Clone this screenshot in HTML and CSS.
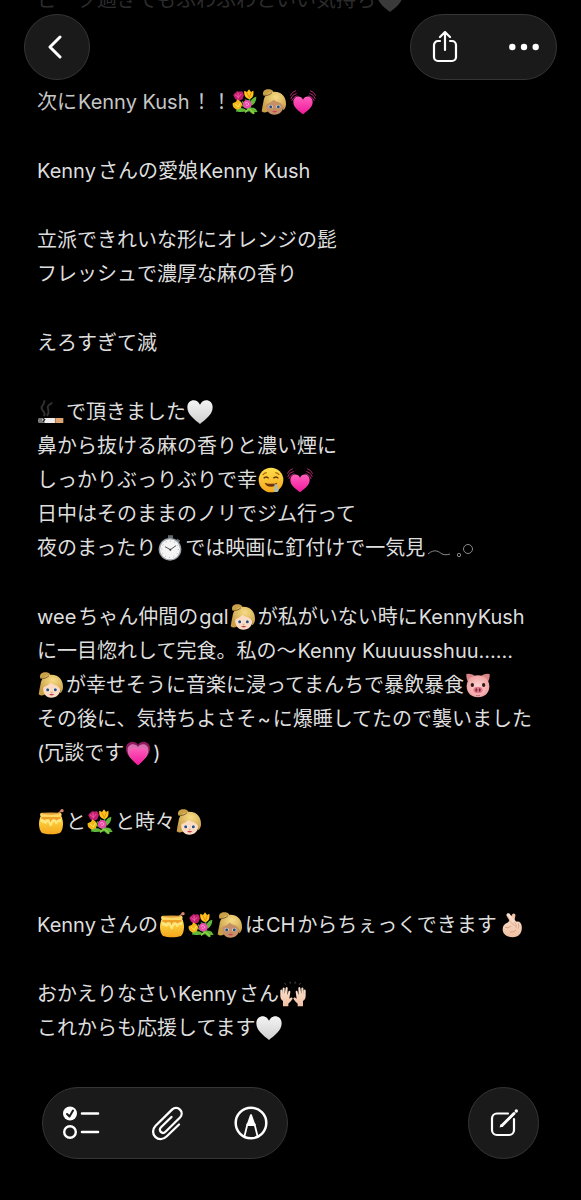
FILE: index.html
```html
<!DOCTYPE html>
<html lang="ja">
<head>
<meta charset="utf-8">
<meta name="viewport" content="width=device-width, initial-scale=1">
<title>Kenny Kush</title>
<link rel="stylesheet" href="styles.css">
</head>
<body>
<svg class="sprite" aria-hidden="true">
  <defs>
    <linearGradient id="pink" x1="0" y1="0" x2="0" y2="1"><stop offset="0" stop-color="#ff5fbd"/><stop offset="1" stop-color="#f0189a"/></linearGradient>
    <linearGradient id="white" x1="0" y1="0" x2="0" y2="1"><stop offset="0" stop-color="#f4f4f4"/><stop offset="1" stop-color="#cfcfcf"/></linearGradient>
    <radialGradient id="hair" cx=".55" cy=".3" r=".7"><stop offset="0" stop-color="#f7dc85"/><stop offset="1" stop-color="#c9a048"/></radialGradient>
    <linearGradient id="yellow" x1="0" y1="0" x2="0" y2="1"><stop offset="0" stop-color="#ffe04a"/><stop offset="1" stop-color="#f5a61d"/></linearGradient>
    <linearGradient id="skin" x1="0" y1="0" x2="0" y2="1"><stop offset="0" stop-color="#fde4d0"/><stop offset="1" stop-color="#f0bfa2"/></linearGradient>
    <radialGradient id="pig"><stop offset="0" stop-color="#ffd6d4"/><stop offset="1" stop-color="#f0a3a3"/></radialGradient>
  </defs>
  <symbol id="woman" viewBox="0 0 78 78">
    <path d="M13 34C3 42 5 58 2 67c7 6 17 4 24-4V36Z" fill="#c9a048"/>
    <path d="M7 19C3 7 12 0 23 1c11 0 17 7 13 14L18 23Z" fill="#c9a048"/>
    <path d="M14 44c0-16 12-24 27-24s27 10 27 27c0 18-12 30-28 30S14 63 14 44Z" fill="currentColor"/>
    <path d="M8 50C4 24 18 8 40 8c24 0 37 18 35 40-1 8-4 13-9 16 3-14-3-20-13-24-7-3-11-4-15-8-5 6-13 9-21 13-2 6-2 12 0 18C11 62 9 56 8 50Z" fill="url(#hair)"/>
    <path d="M8 19c9 2 18-1 25-8" fill="none" stroke="#7f6127" stroke-width="3"/>
    <ellipse cx="29" cy="53" rx="6" ry="5" fill="#fff"/><ellipse cx="52" cy="53" rx="6" ry="5" fill="#fff"/>
    <circle cx="29" cy="53" r="4.500" fill="#284d80"/><circle cx="52" cy="53" r="4.500" fill="#284d80"/>
    <path d="M38 60q3 3 6 0" fill="none" stroke="#b97c60" stroke-width="2"/>
    <path d="M33 67q8-3 16 0-8 7-16 0Z" fill="#cf4254"/>
  </symbol>
  <symbol id="bouquet" viewBox="0 0 78 78">
    <path d="m30 38 33 36M40 31l23 39M18 42l44 25M52 24 57 70M12 66l60-1" stroke="#3f9c36" stroke-width="5" fill="none"/>
    <path d="M56 37c3-9 12-13 17-14 0 12-5 23-15 27ZM49 61c7-6 19-6 23 0l5 8-20 1ZM12 62c10-8 23-5 31 2-10 6-23 8-31-2Z" fill="#63b83a"/>
    <path d="m53 61 14 13M39 70l13-12" stroke="#8ed242" stroke-width="5"/>
    <path d="M4 19c1-7 9-7 11-13 8 5 13-3 18 4 1 6 5 9 0 15 0 8-8 8-13 11-7-2-12-6-16-17Z" fill="#c31d70"/>
    <path d="m9 17 10 8 9-10M18 11l1 17" fill="none" stroke="#ef5ba2" stroke-width="3"/>
    <path d="M37 5 45 9l6-8 6 8 7-4c2 12-1 23-12 25-12-2-17-13-15-25Z" fill="#ffc51c"/>
    <path d="m44 10 8 16 6-16" fill="none" stroke="#e98b12" stroke-width="3"/>
    <path d="m2 43 10-5 4-7 9 6 6 8-4 12-11 5C6 59 1 54 2 43Z" fill="#f4b719"/>
    <path d="m9 45 10 9 6-12" fill="none" stroke="#ffe45a" stroke-width="3"/>
    <path d="M34 39c5-8 17-8 22-1 6 8 1 18-7 20-11 3-20-8-15-19Z" fill="#e94bab"/>
    <path d="M39 43q8-7 12 2-4 7-9 3" fill="none" stroke="#ff9bd1" stroke-width="3"/>
  </symbol>
  <symbol id="beating" viewBox="0 0 78 78">
    <path d="M39 76C25 65 10 55 10 39c0-19 23-22 29-7 6-15 29-12 29 7 0 16-15 26-29 37Z" fill="url(#pink)"/>
    <g fill="none" stroke="#b3246f" stroke-width="3"><path d="M2 30Q6 16 20 13M5 36Q9 24 22 20M1 20Q6 8 18 5"/><path d="M76 30Q72 16 58 13M73 36Q69 24 56 20M77 20Q72 8 60 5"/></g>
  </symbol>
  <symbol id="growing" viewBox="0 0 78 78">
    <path d="M39 72C17 57 3 45 3 25 3 4 29-1 39 14 49-1 75 4 75 25c0 20-14 32-36 47Z" fill="#8e195d"/>
    <path d="M39 74C20 59 7 47 8 30 8 11 31 8 39 21 47 8 70 11 70 30c1 17-12 29-31 44Z" fill="#d66fae"/>
    <path d="M39 76C23 62 12 51 13 37c0-15 20-19 26-6 6-13 26-9 26 6 1 14-10 25-26 39Z" fill="url(#pink)"/>
  </symbol>
  <symbol id="heart" viewBox="0 0 78 78"><path d="M39 75C24 63 1 47 1 25 1 2 29-4 39 17 49-4 77 2 77 25c0 22-23 38-38 50Z" fill="url(#white)"/></symbol>
  <symbol id="fadedheart" viewBox="0 0 78 78"><path d="M39 75C24 63 1 47 1 25 1 2 29-4 39 17 49-4 77 2 77 25c0 22-23 38-38 50Z" fill="#3a3a3a"/></symbol>
  <symbol id="cigarette" viewBox="0 0 78 78">
    <path d="M17 51C29 41 4 33 12 22c4-6 8-9 7-18M26 50c15-12-3-22 5-30 5-6 10-4 11-10" fill="none" stroke="#303030" stroke-width="6"/>
    <path d="M3 57h49v15H3q-4-7 0-15Z" fill="#eee"/><path d="M3 57h12l-3 6 4 4-2 5H3q-4-7 0-15Z" fill="#777"/><path d="m15 58 5 4-4 5 3 4" stroke="#222" stroke-width="4" fill="none"/><path d="M52 57h24v15H52Z" fill="#dda574"/><path d="M52 57v15" stroke="#b77945" stroke-width="2"/>
  </symbol>
  <symbol id="drool" viewBox="0 0 78 78">
    <circle cx="39" cy="39" r="37" fill="url(#yellow)"/>
    <path d="M14 24q5-7 12-7M52 17q7 0 12 7" fill="none" stroke="#a35d0d" stroke-width="3.500"/>
    <path d="M17 34q8-8 15 0M46 34q8-8 15 0" fill="none" stroke="#5e3208" stroke-width="4"/>
    <path d="M20 47q20 7 38 0-4 12-19 12T20 47Z" fill="#70310f"/>
    <path d="M49 52h9l1 11c6 7 3 12-4 12-8 0-10-7-5-13Z" fill="#a9bfae"/>
  </symbol>
  <symbol id="watch" viewBox="0 0 78 78">
    <path d="M33 1h15v9H33zM61 11l9 6-6 7-8-6Z" fill="#606870"/>
    <circle cx="39" cy="43" r="34" fill="#9ba2a9"/><circle cx="39" cy="43" r="30" fill="#f5f5f5"/>
    <circle cx="39" cy="43" r="25" fill="none" stroke="#888" stroke-width="3" stroke-dasharray="2 11"/>
    <path d="m24 35 16 9 17-12" fill="none" stroke="#333" stroke-width="2.500"/><circle cx="40" cy="44" r="3" fill="#333"/>
  </symbol>
  <symbol id="pigface" viewBox="0 0 78 78">
    <path d="M4 6q18-3 27 7L12 33Q3 23 4 6ZM74 6q-18-3-27 7l19 20q9-10 8-27Z" fill="#d98484"/>
    <path d="M39 10c22 0 34 16 34 33 0 21-15 33-34 33S5 64 5 43c0-17 12-33 34-33Z" fill="url(#pig)"/>
    <ellipse cx="22" cy="39" rx="5" ry="6" fill="#30191a"/><ellipse cx="56" cy="39" rx="5" ry="6" fill="#30191a"/>
    <ellipse cx="39" cy="54" rx="14" ry="10" fill="#e7798b"/><ellipse cx="34" cy="54" rx="3" ry="5" fill="#722a3b"/><ellipse cx="44" cy="54" rx="3" ry="5" fill="#722a3b"/>
    <path d="M33 70q6 3 12 0" fill="none" stroke="#a84c5e" stroke-width="2"/>
  </symbol>
  <symbol id="honey" viewBox="0 0 78 78">
    <path d="M54 19 71 5" stroke="#bd6f45" stroke-width="5"/><circle cx="72" cy="5" r="5" fill="#d88974"/>
    <path d="M9 20h60c8 13 9 39-3 52-15 5-39 5-54 0C0 59 1 33 9 20Z" fill="url(#yellow)"/>
    <path d="M8 24h62v13c-5 6-8 0-11 3-2 8-8 7-8 0-9-2-7 6-11 12-8 1-5-12-12-12-3 6-8 7-10 1-5 1-9 0-11-4Z" fill="#ffe67c"/>
    <path d="M10 24h58v5c-7 1-10 2-12 6-4-3-4-5-10-4-5 0-6 4-8 9-4-4-1-9-8-9-6 0-8 1-10 3-3-2-4-4-11-4Z" fill="#eea127"/>
    <rect x="6" y="11" width="65" height="12" rx="6" fill="#ffd86a"/><ellipse cx="38" cy="14" rx="27" ry="3" fill="#e6a238"/>
  </symbol>
  <symbol id="fingers" viewBox="0 0 78 78">
    <path d="M24 44 42 8c4-7 12-3 10 4L46 44Z" fill="#efc0a3"/>
    <path d="M26 12c-3-8 7-11 11-4l18 21c9-2 15 4 16 13 3 18-7 34-27 34-18 0-30-10-30-24 0-10 5-17 14-20l8-4Z" fill="url(#skin)"/>
    <path d="m37 29-9-17M38 30l12 12M49 30q8 7 5 17M61 34q4 9-1 16M21 46q9 4 19-4M36 60q10 2 18-6" fill="none" stroke="#c88d72" stroke-width="2"/>
  </symbol>
  <symbol id="hands" viewBox="0 0 78 78">
    <path d="M9 76V60C3 56 1 50 1 44V28q3-5 6 0v13l1-19q3-5 6 0v18l3-20q4-4 6 1l-1 22 4-13q5-2 5 3l-3 20 4-3c5-2 7 1 5 5-5 7-8 10-12 13v8Z" fill="url(#skin)"/>
    <path d="M69 76V60c6-4 8-10 8-16V28q-3-5-6 0v13l-1-19q-3-5-6 0v18l-3-20q-4-4-6 1l1 22-4-13q-5-2-5 3l3 20-4-3c-5-2-7 1-5 5 5 7 8 10 12 13v8Z" fill="url(#skin)"/>
    <path d="m17 11-3-5M31 8l-1-6M45 8l1-6M58 11l4-5" stroke="#4d4d4d" stroke-width="3"/>
  </symbol>
</svg>

<header class="topbar">
  <p class="scrolled">ピーク過ぎてもふわふわといい気持ち<svg class="emoji" role="img" aria-label="ハート"><use href="#fadedheart"/></svg></p>
  <button class="glass round" type="button" aria-label="戻る">
    <svg class="icon" width="18" height="26" viewBox="0 0 18 26"><path d="M12 3 2 13l10 10" stroke-width="3"/></svg>
  </button>
  <div class="glass pair">
    <button type="button" aria-label="共有">
      <svg class="icon" width="26" height="32" viewBox="0 0 26 32"><path d="M8 10H6a4 4 0 0 0-4 4v12a4 4 0 0 0 4 4h14a4 4 0 0 0 4-4V14a4 4 0 0 0-4-4h-2M13 19V2M8 6l5-5 5 5" stroke-width="2.200"/></svg>
    </button>
    <button type="button" aria-label="その他">
      <svg class="icon" width="30" height="8" viewBox="0 0 30 8"><g class="solid"><circle cx="3.300" cy="4" r="3.200"/><circle cx="15" cy="4" r="3.200"/><circle cx="26.700" cy="4" r="3.200"/></g></svg>
    </button>
  </div>
</header>

<main class="note">
  <p class="fading">次に<span class="latin">Kenny Kush</span>！！<svg class="emoji" role="img" aria-label="花束"><use href="#bouquet"/></svg><svg class="emoji tan" role="img" aria-label="女性"><use href="#woman"/></svg><svg class="emoji" role="img" aria-label="ドキドキするハート"><use href="#beating"/></svg></p>
  <p><span class="latin first">Kenny</span>さんの愛娘<span class="latin">Kenny Kush</span></p>
  <p>立派できれいな形にオレンジの髭<br>フレッシュで濃厚な麻の香り</p>
  <p>えろすぎて滅</p>
  <p><svg class="emoji" role="img" aria-label="たばこ"><use href="#cigarette"/></svg>で頂きました<svg class="emoji" role="img" aria-label="白いハート"><use href="#heart"/></svg><br>鼻から抜ける麻の香りと濃い煙に<br>しっかりぶっりぶりで幸<svg class="emoji" role="img" aria-label="よだれを垂らした顔"><use href="#drool"/></svg><svg class="emoji" role="img" aria-label="ドキドキするハート"><use href="#beating"/></svg><br>日中はそのままのノリでジム行って<br>夜のまったり<svg class="emoji" role="img" aria-label="ストップウォッチ"><use href="#watch"/></svg>では映画に釘付けで一気見<svg class="cloud" role="img" aria-label="けむり" viewBox="0 0 48 20"><path d="M1 13c7-6 11-2 14 0 3 1 5 1 8 0"/><circle cx="32" cy="14" r="1.700"/><circle cx="41" cy="8" r="4.500"/></svg></p>
  <p><span class="latin first">wee</span>ちゃん仲間の<span class="latin last">gɑl</span><svg class="emoji" role="img" aria-label="女性"><use href="#woman"/></svg>が私がいない時に<span class="latin">KennyKush</span><br>に一目惚れして完食。私の〜<span class="latin">Kenny Kuuuusshuu……</span><br><svg class="emoji" role="img" aria-label="女性"><use href="#woman"/></svg>が幸せそうに音楽に浸ってまんちで暴飲暴食<svg class="emoji" role="img" aria-label="ぶた"><use href="#pigface"/></svg><br>その後に、気持ちよさそ<span class="latin">~</span>に爆睡してたので襲いました<br>(冗談です<svg class="emoji" role="img" aria-label="大きくなるハート"><use href="#growing"/></svg>)</p>
  <p><svg class="emoji" role="img" aria-label="はちみつ"><use href="#honey"/></svg>と<svg class="emoji" role="img" aria-label="花束"><use href="#bouquet"/></svg>と時々<svg class="emoji" role="img" aria-label="女性"><use href="#woman"/></svg></p>
  <p class="apart"><span class="latin first">Kenny</span>さんの<svg class="emoji" role="img" aria-label="はちみつ"><use href="#honey"/></svg><svg class="emoji" role="img" aria-label="花束"><use href="#bouquet"/></svg><svg class="emoji tan" role="img" aria-label="女性"><use href="#woman"/></svg>は<span class="latin">CH</span>からちぇっくできます<svg class="emoji" role="img" aria-label="指ハート"><use href="#fingers"/></svg></p>
  <p>おかえりなさい<span class="latin">Kenny</span>さん<svg class="emoji" role="img" aria-label="ばんざい"><use href="#hands"/></svg><br>これからも応援してます<svg class="emoji" role="img" aria-label="白いハート"><use href="#heart"/></svg></p>
</main>

<footer class="toolbar">
  <div class="glass tools">
    <button type="button" aria-label="チェックリスト">
      <svg class="icon" width="37" height="34" viewBox="0 0 37 34"><circle class="solid" cx="7" cy="7.500" r="7"/><path d="m4 8 2.500 2.500L10 4.500" class="tick"/><circle cx="7" cy="26" r="5.800" stroke-width="2.400"/><path d="M19 7.500h16M19 26h16" stroke-width="2.600"/></svg>
    </button>
    <button type="button" aria-label="添付">
      <svg class="icon" width="32" height="36" viewBox="0 0 32 36"><path d="m28 19.500-12.500 12c-3.500 3.500-8.300 3.300-11.200.4-3-3-3-7.800.3-11.200L21 4.600c2.400-2.300 5.800-2.300 8 0 2.200 2.200 2.200 5.500 0 7.900L14.500 26.700c-1.500 1.500-3.400 1.500-4.700.2-1.300-1.300-1.300-3.200.2-4.700L20.500 12" stroke-width="2.300"/></svg>
    </button>
    <button type="button" aria-label="マークアップ">
      <svg class="icon" width="34" height="34" viewBox="0 0 34 34"><circle cx="17" cy="17" r="15.300" stroke-width="2.500"/><path d="m10.500 30 3-12M23.500 30l-3-12M13 19h8" stroke-width="1.800"/><path class="solid" d="M12.500 19 16 9q1-2 2 0l3.500 10Z"/></svg>
    </button>
  </div>
  <button class="glass round large" type="button" aria-label="新規メモ">
    <svg class="icon" width="28" height="28" viewBox="0 0 28 28"><path d="M18 4.500H7a5 5 0 0 0-5 5V21a5 5 0 0 0 5 5h12a5 5 0 0 0 5-5V10" stroke-width="2.200"/><path d="m12 16.500 12-12" stroke-width="3"/><path class="solid" d="m9.500 18.500 1.300-3.500 2.400 2.400Z"/><circle class="solid" cx="26.300" cy="2" r="1.700"/></svg>
  </button>
</footer>
</body>
</html>
```
FILE: styles.css
```css
* {
  box-sizing: border-box;
}

body {
  margin: 0;
  min-height: 100vh;
  display: flex;
  flex-direction: column;
  background: #000;
  color: #dedede;
  font-family: Inter, "Noto Sans CJK JP", sans-serif;
  font-size: 20px;
  line-height: 34px;
  overflow-x: hidden;
}

p {
  margin: 0;
}

button {
  padding: 0;
  border: 0;
  background: none;
  color: #fff;
  display: flex;
  align-items: center;
  justify-content: center;
}

.sprite {
  position: absolute;
  width: 0;
  height: 0;
}

.topbar {
  position: relative;
  display: flex;
  justify-content: space-between;
  padding: 14px 24px 5px;
}

.scrolled {
  position: absolute;
  top: -17px;
  left: 37px;
  color: #2c2c2c;
  white-space: nowrap;
}

.glass {
  position: relative;
  background: #1a1a1a;
  border: 1px solid #353535;
  border-radius: 36px;
}

.round {
  width: 66px;
  height: 66px;
}

.large {
  width: 71px;
  height: 72px;
}

.pair {
  display: flex;
  justify-content: space-between;
  width: 147px;
  height: 66px;
  padding-left: 2px;
}

.pair button {
  width: 64px;
}

.icon {
  display: block;
  fill: none;
  stroke: #fff;
  stroke-linecap: round;
  stroke-linejoin: round;
}

.solid {
  fill: #fff;
  stroke: none;
}

.tick {
  stroke: #1a1a1a;
  stroke-width: 2px;
}

.note {
  display: flex;
  flex-direction: column;
  gap: 35px;
  padding: 0 20px 0 37px;
  white-space: nowrap;
}

.fading {
  color: #c6c6c6;
}

.apart {
  margin-top: 34px;
}

.latin {
  margin: 0 2px 0 1px;
}

.first {
  margin-left: 0;
}

.last {
  margin-right: 0;
}

.emoji {
  width: 26px;
  height: 26px;
  margin: 0 2px 0 1px;
  vertical-align: -6px;
  color: #fbdcc3;
}

.tan {
  color: #c69067;
}

.cloud {
  width: 48px;
  height: 20px;
  margin-left: 2px;
  vertical-align: -6px;
  fill: none;
  stroke: #8a8a8a;
  stroke-width: 1px;
}

.toolbar {
  display: flex;
  justify-content: space-between;
  margin-top: auto;
  padding: 36px 42px 41px;
}

.tools {
  display: flex;
  align-items: center;
  justify-content: space-between;
  width: 246px;
  height: 72px;
  padding: 0 19px 0 20px;
}
```
